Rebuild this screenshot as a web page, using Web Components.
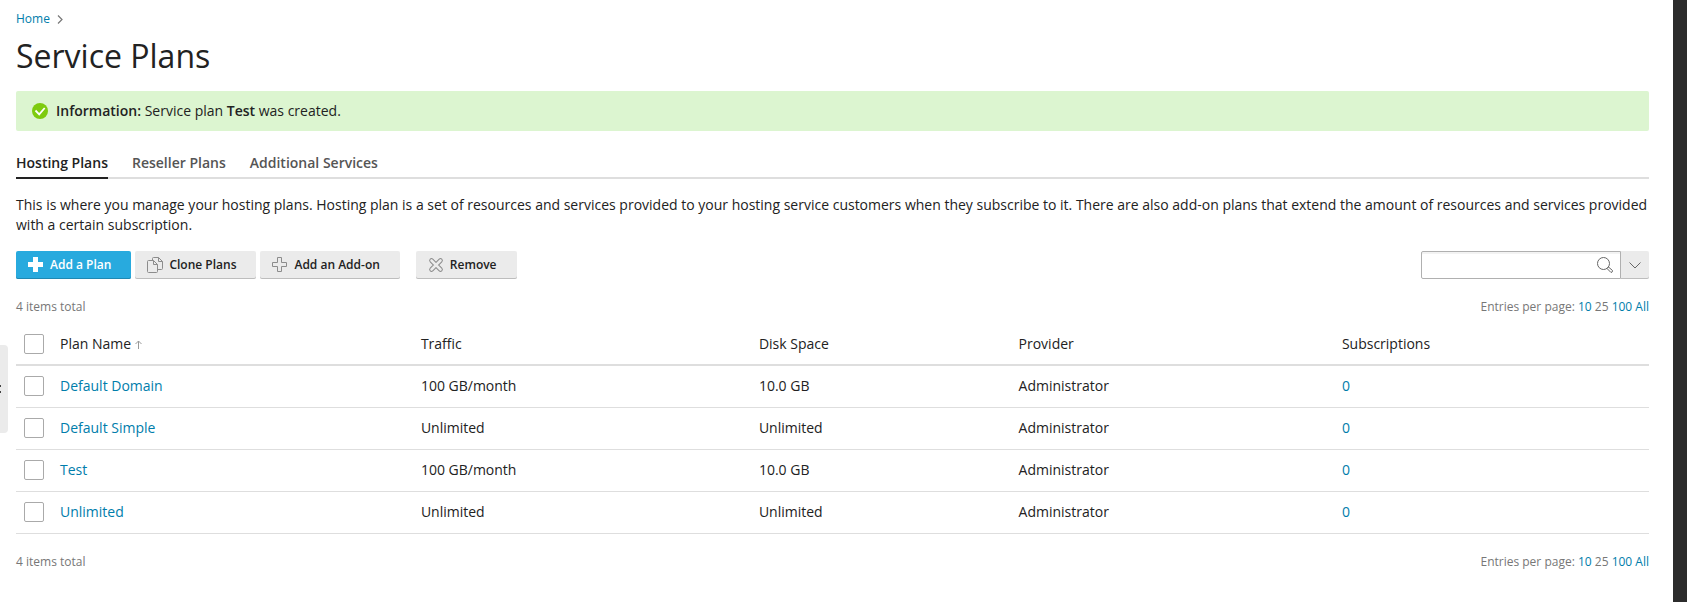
<!DOCTYPE html>
<html lang="en">
<head>
<meta charset="utf-8">
<title>Service Plans</title>
<style>
  html, body { margin: 0; min-height: 100vh; }
  body { font: 14px/20px "Open Sans", sans-serif; color: #222; background: #fff; }
</style>
</head>
<body>
<app-shell>
  <bread-crumbs></bread-crumbs>
  <page-title>Service Plans</page-title>
  <info-message><b>Information:</b> Service plan <b>Test</b> was created.</info-message>
  <tab-bar></tab-bar>
  <page-hint>This is where you manage your hosting plans. Hosting plan is a set of resources and services provided to your hosting service customers when they subscribe to it. There are also add-on plans that extend the amount of resources and services provided with a certain subscription.</page-hint>
  <tool-bar>
    <tool-button icon="plus" primary>Add a Plan</tool-button>
    <tool-button icon="clone">Clone Plans</tool-button>
    <tool-button icon="addon">Add an Add-on</tool-button>
    <tool-button icon="remove" apart>Remove</tool-button>
    <search-box slot="end"></search-box>
  </tool-bar>
  <list-pager></list-pager>
  <plan-table></plan-table>
  <list-pager></list-pager>
</app-shell>

<script>
const LINK = 'a { color: #007dab; text-decoration: none; } a:hover { text-decoration: underline; }';

const ICONS = {
  plus: '<path fill="#fff" d="M5 0h5v5h5v5h-5v5H5v-5H0V5h5z"/>',
  addon: '<path fill="none" stroke="#8c8c8c" d="M5.5 .5h4v5h5v4h-5v5h-4v-5h-5v-4h5z"/>',
  clone: '<g fill="#ebebeb" stroke="#8c8c8c"><path d="M6.5 .5h5l4 4v7q0 1-1 1h-8q-1 0-1-1v-10q0-1 1-1zM11.5 .5v4h4"/><path d="M1.5 3.5h5l4 4v7q0 1-1 1h-8q-1 0-1-1v-10q0-1 1-1zM6.5 3.500v4h4"/></g>',
  remove: '<g fill="none" stroke-linecap="round"><path stroke="#8c8c8c" stroke-width="4.600" d="M3.500 3.500l9 9M12.500 3.500l-9 9"/><path stroke="#ebebeb" stroke-width="2.600" d="M3.500 3.500l9 9M12.500 3.500l-9 9"/></g>'
};

function define(name, html) {
  const template = document.createElement('template');
  customElements.define(name, class extends HTMLElement {
    constructor() { super(); this.attachShadow({ mode: 'open' }); }
    connectedCallback() {
      template.innerHTML = typeof html === 'function' ? html(this) : html;
      this.shadowRoot.replaceChildren(template.content.cloneNode(true));
    }
  });
}

define('app-shell', `
  <style>
    :host { display: flex; min-height: 100vh; }
    main { flex: 1; min-width: 0; padding: 9px 24px 0 16px; }
    aside { flex: 0 0 14px; background: #2c2c2c; }
    button { position: absolute; left: 0; top: 345px; width: 8px; height: 88px; padding: 0; border: 0;
      border-radius: 0 4px 4px 0; background: #ebebeb; display: flex; align-items: center; overflow: hidden; }
  </style>
  <button aria-label="Toggle sidebar"><svg width="2" height="10" aria-hidden="true"><path fill="#444" d="M0 1h1v2H0zM0 7h1v2H0z"/></svg></button>
  <main><slot></slot></main>
  <aside></aside>`);

define('bread-crumbs', `
  <style>${LINK}
    :host { display: block; font-size: 12px; line-height: 20px; }
    nav { display: flex; align-items: center; gap: 7px; }
  </style>
  <nav aria-label="Breadcrumb"><a href="#home">Home</a>
  <svg width="6" height="9" viewBox="0 0 6 9" aria-hidden="true"><path d="M1 .5l4 4-4 4" fill="none" stroke="#777" stroke-width="1.200"/></svg></nav>`);

define('page-title', `
  <style>
    :host { display: block; }
    h1 { margin: 7px 0 15px; font-size: 32px; line-height: 40px; font-weight: 400; }
  </style>
  <h1><slot></slot></h1>`);

define('info-message', `
  <style>
    :host { display: flex; align-items: center; gap: 8px; padding: 10px 16px; border-radius: 2px; background: #dcf5d0; }
    ::slotted(b) { font-weight: 600; }
  </style>
  <svg width="16" height="16" viewBox="0 0 16 16" aria-hidden="true"><circle cx="8" cy="8" r="8" fill="#7ecb0f"/><path d="M3.500 7.500l3.700 3.800 5.500-6.300" fill="none" stroke="#fff" stroke-width="1.800"/></svg>
  <div><slot></slot></div>`);

define('tab-bar', `
  <style>
    :host { display: block; margin-top: 20px; }
    nav { display: flex; gap: 24px; box-shadow: inset 0 -2px #dedede; }
    a { padding: 2px 0 4px; border-bottom: 2px solid transparent; color: #555; font-weight: 600; text-decoration: none; }
    a[aria-current] { color: #222; border-color: #222; }
  </style>
  <nav><a href="#hosting" aria-current="page">Hosting Plans</a><a href="#reseller">Reseller Plans</a><a href="#services">Additional Services</a></nav>`);

define('page-hint', `
  <style>:host { display: block; } p { margin: 16px 0; }</style>
  <p><slot></slot></p>`);

define('tool-bar', `
  <style>
    :host { display: flex; justify-content: space-between; }
    div { display: flex; gap: 4px; }
  </style>
  <div><slot></slot></div><slot name="end"></slot>`);

define('tool-button', host => `
  <style>
    :host { display: block; }
    :host([apart]) { margin-left: 12px; }
    button { display: flex; align-items: center; gap: 6px; height: 28px; padding: 0 20px 0 12px; border: 0; border-radius: 2px;
      background: #ebebeb; box-shadow: inset 0 -1px #bdbdbd; color: #222; font: 600 12px/20px "Open Sans", sans-serif; }
    :host([primary]) button { background: #28aade; box-shadow: inset 0 -1px #1f88b2; color: #fff; }
    svg { flex: none; }
  </style>
  <button type="button"><svg width="16" height="16" aria-hidden="true">${ICONS[host.getAttribute('icon')]}</svg><span><slot></slot></span></button>`);

define('search-box', `
  <style>
    :host { display: flex; }
    form { display: flex; width: 200px; height: 28px; box-sizing: border-box; border: 1px solid #b0b0b0; border-radius: 2px 0 0 2px; box-shadow: inset 0 2px #f3f3f3; }
    input { flex: 1; min-width: 0; border: 0; padding: 0 8px; background: none; font: inherit; outline: 0; }
    button { display: grid; place-items: center; padding: 0; border: 0; background: none; }
    form button { width: 30px; }
    .more { width: 28px; height: 28px; background: #ebebeb; box-shadow: inset 0 -1px #bdbdbd; border-radius: 0 2px 2px 0; }
  </style>
  <form role="search"><input type="text" aria-label="Search plans"><button type="button" aria-label="Search">
    <svg width="16" height="16" viewBox="0 0 16 16" fill="none" stroke="#666" aria-hidden="true"><circle cx="6.500" cy="6.500" r="6"/><path d="M10 11.500l1.500-1.500 4 3.500q.3 1.700-1.500 2z"/></svg></button></form>
  <button class="more" type="button" aria-label="Search options"><svg width="12" height="7" aria-hidden="true"><path d="M.5 .5l5.500 5.500 5.500-5.500" fill="none" stroke="#666"/></svg></button>`);

define('list-pager', `
  <style>${LINK}
    :host { display: flex; justify-content: space-between; padding: 18px 0 8px; font-size: 12px; line-height: 20px; color: #777; }
  </style>
  <span>4 items total</span>
  <span>Entries per page: <a href="#10">10</a> 25 <a href="#100">100</a> <a href="#all">All</a></span>`);

const PLANS = [
  ['Default Domain', '100 GB/month', '10.0 GB'],
  ['Default Simple', 'Unlimited', 'Unlimited'],
  ['Test', '100 GB/month', '10.0 GB'],
  ['Unlimited', 'Unlimited', 'Unlimited']
];

define('plan-table', `
  <style>${LINK}
    :host { display: block; }
    table { width: 100%; table-layout: fixed; border-collapse: separate; border-spacing: 0; }
    th, td { box-sizing: border-box; padding: 10px 8px 11px; text-align: left; font-weight: 400; line-height: 20px; border-bottom: 1px solid #dedede; }
    th { padding: 9px 8px 10px; border-bottom-width: 2px; }
    th.check, td.check { width: 36px; padding: 0 8px 2px; }
    .name { width: 22.1%; } .traffic { width: 20.7%; } .disk { width: 15.9%; } .provider { width: 19.8%; }
    input { display: block; appearance: none; box-sizing: border-box; width: 20px; height: 20px; margin: 0; border: 1px solid #aaa; border-radius: 2px; background: #fff; }
    input:checked { background: #28aade; }
  </style>
  <table>
    <thead><tr>
      <th class="check"><input type="checkbox" aria-label="Select all plans"></th>
      <th class="name">Plan Name <svg width="7" height="9" aria-hidden="true"><path d="M3.500 9V1M.5 4l3-3 3 3" fill="none" stroke="#999"/></svg></th>
      <th class="traffic">Traffic</th><th class="disk">Disk Space</th><th class="provider">Provider</th><th>Subscriptions</th>
    </tr></thead>
    <tbody>${PLANS.map(([name, traffic, disk]) => `<tr>
      <td class="check"><input type="checkbox" aria-label="Select ${name}"></td>
      <td><a href="#plan">${name}</a></td><td>${traffic}</td><td>${disk}</td><td>Administrator</td><td><a href="#subscriptions">0</a></td></tr>`).join('')}
    </tbody>
  </table>`);
</script>
</body>
</html>
